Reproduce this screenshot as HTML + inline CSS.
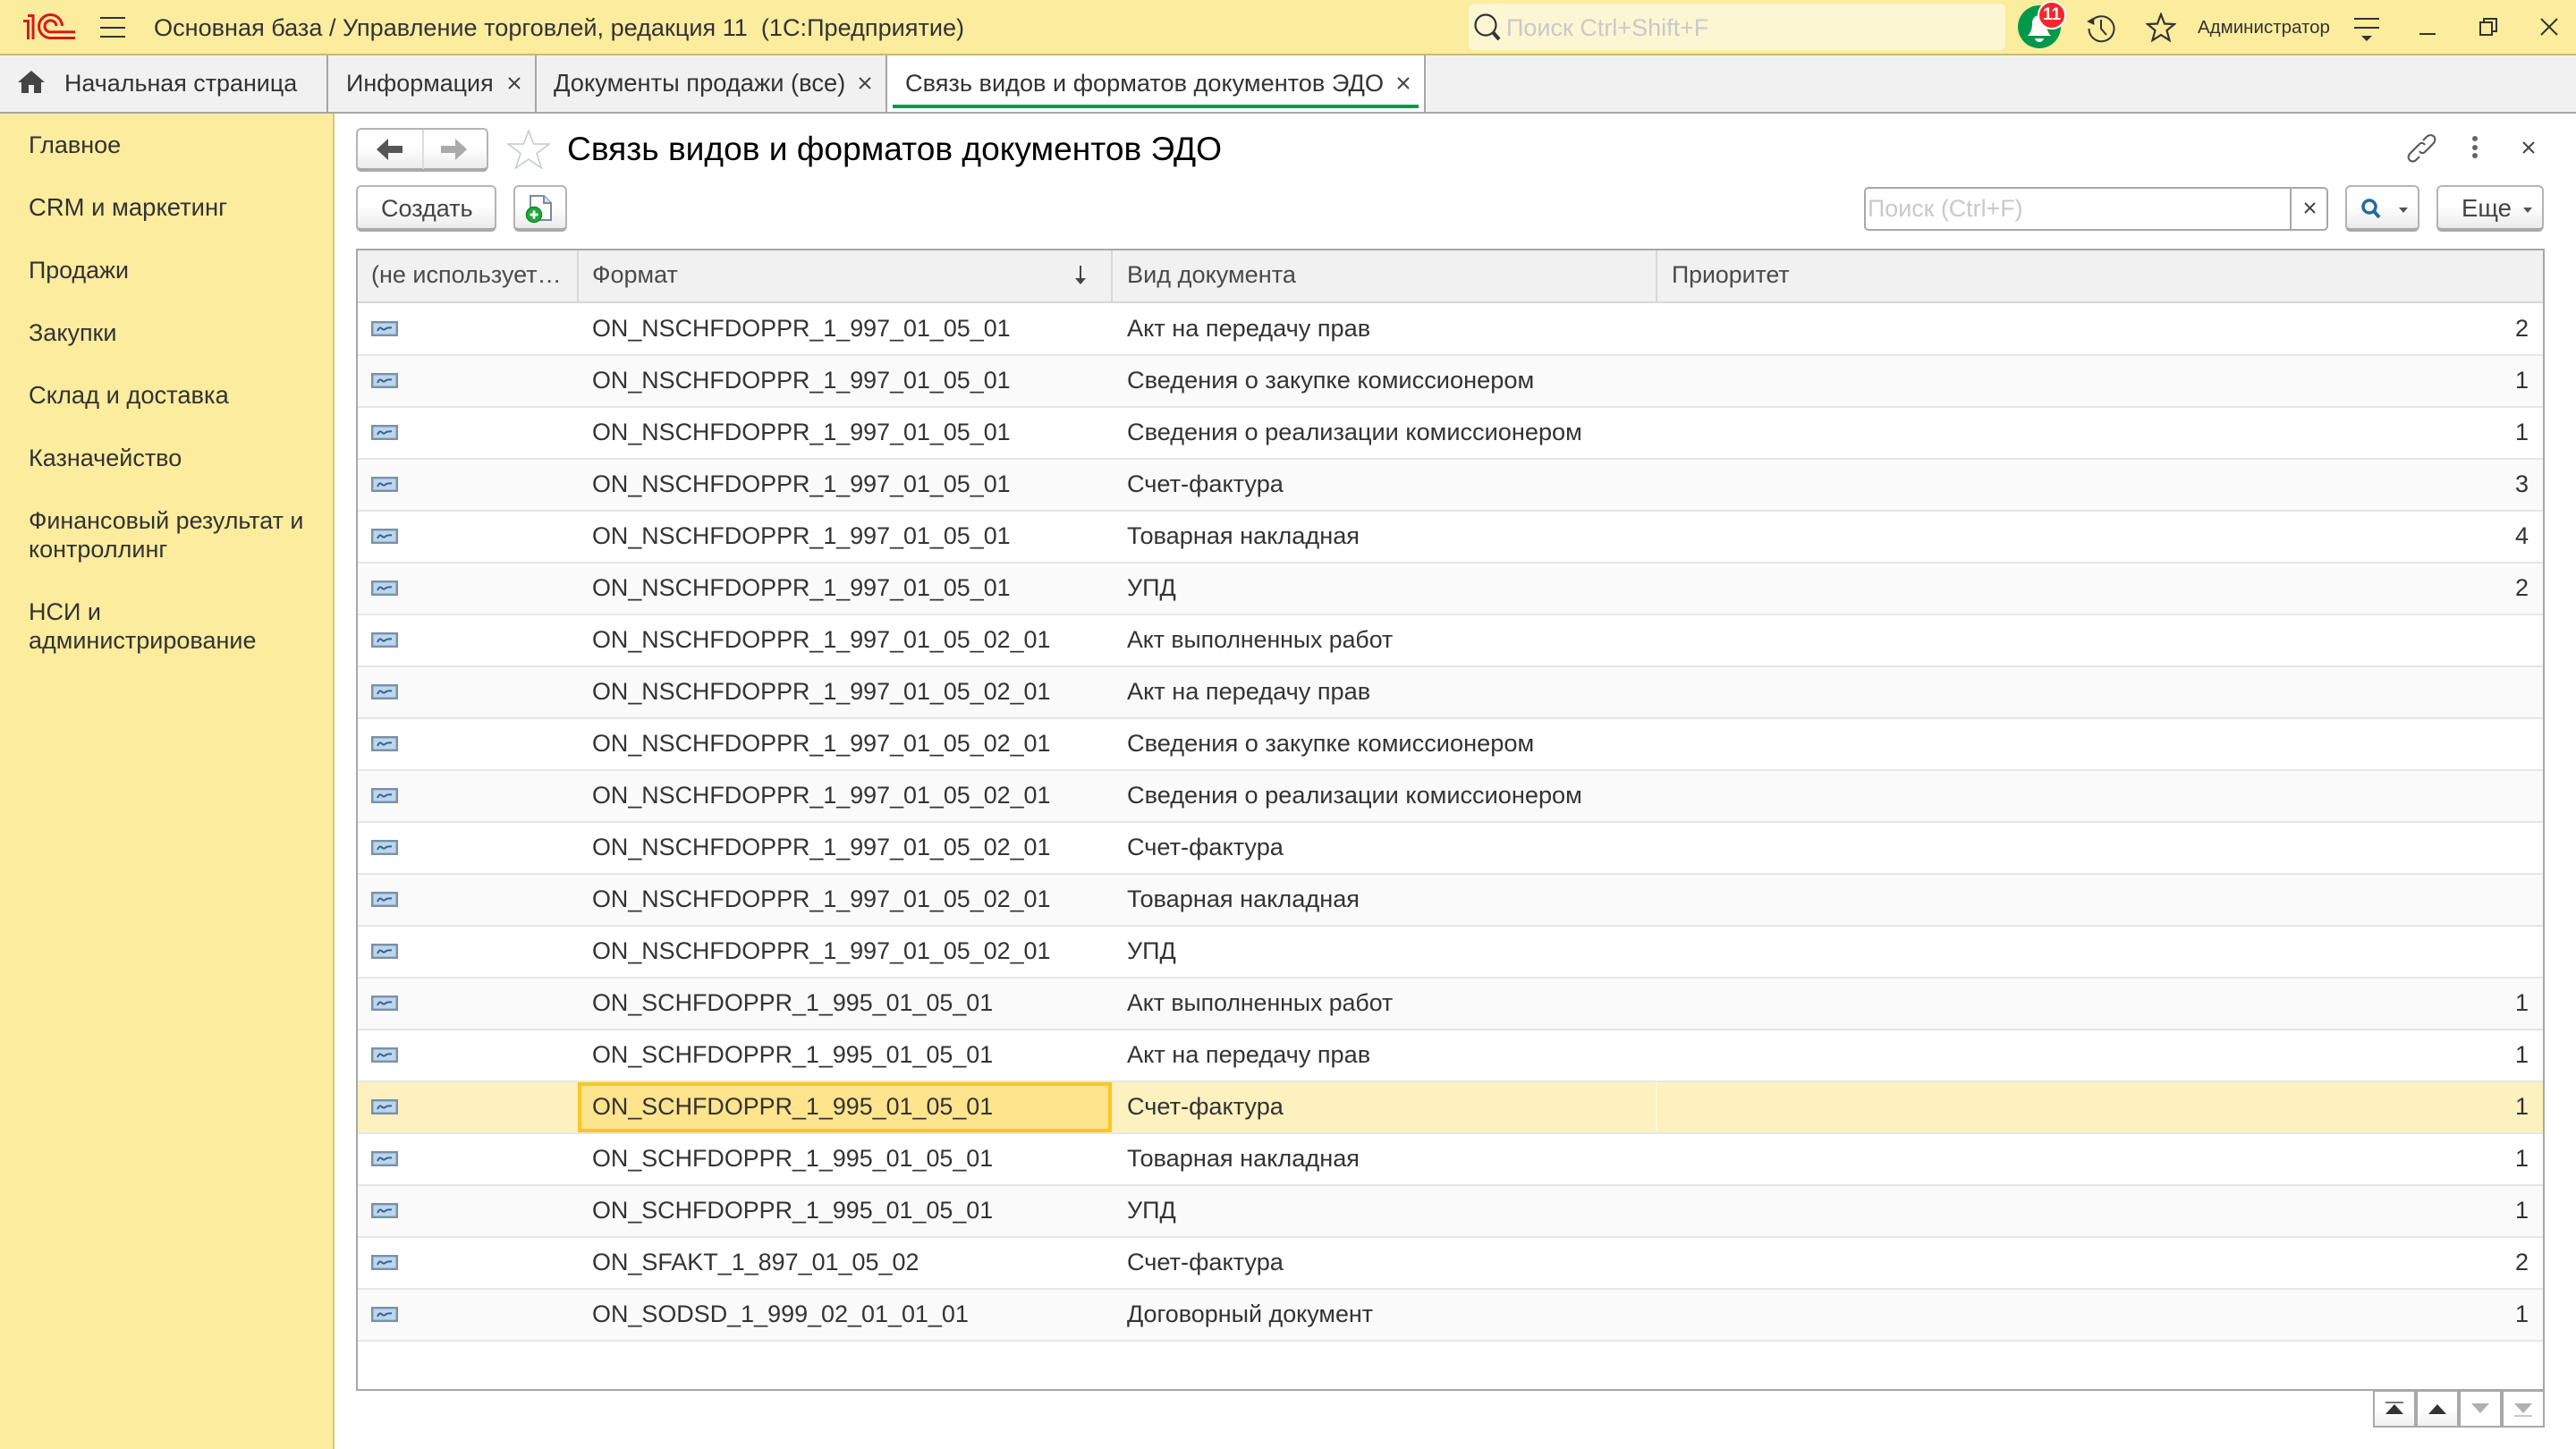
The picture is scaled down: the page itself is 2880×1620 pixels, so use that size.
<!DOCTYPE html>
<html lang="ru"><head><meta charset="utf-8"><title>Связь видов и форматов документов ЭДО</title>
<style>
html,body{margin:0;padding:0;width:2880px;height:1620px;overflow:hidden;background:#fff}
body{position:relative;font-family:"Liberation Sans",Arial,sans-serif;font-size:27px;color:#333}
div,span,svg{position:absolute;box-sizing:border-box}
.t{white-space:pre;line-height:36px;height:36px}
.btn{background:linear-gradient(#fff 45%,#ececec);border:2px solid #b4b4b4;border-bottom:4px solid #aaa;border-radius:6px}
.r{left:400px;width:2443px;height:58px;border-bottom:2px solid #e6e6e6}
.g{background:#fafafa}
.r svg{left:15px;top:19px}
.a{left:262px;top:9px;font-size:26.88px}.b{left:860px;top:9px;font-size:27.15px}.c{right:16px;top:9px}
.w{font-size:26.66px}.z{font-size:27.2px}.x{font-size:26.95px}
.pg{top:1554px;height:42px;width:48px;border:2px solid #a8a8a8}
</style></head><body>
<svg width="0" height="0" style="left:0;top:0"><defs><symbol id="ic" viewBox="0 0 30 17"><rect x="1.2" y="1.2" width="27.6" height="14.6" fill="#bcd6ec" stroke="#7a90a8" stroke-width="2.4"/><path d="M7 11 C9 7 10 6.5 12 8.5 C14 10.5 15 9.5 17 8 C18.5 7.2 20 7.5 23 7.2" fill="none" stroke="#3d5f90" stroke-width="2"/></symbol></defs></svg>

<!-- top bar -->
<div style="left:0;top:0;width:2880px;height:62px;background:#fbec9e;border-bottom:2px solid #c9bb68"></div>
<svg style="left:0;top:0" width="100" height="60" viewBox="0 0 100 60" fill="none" stroke="#d8181c" stroke-width="3"><path d="M26 23.5H31.5V44M31 17.5H37V44"/><path d="M84 42.500H57A13 13 0 1 1 69.500 29"/><path d="M84 35.800H57A6.500 6.500 0 1 1 63 29"/></svg>
<div style="left:112px;top:19px;width:28px;height:2px;background:#333"></div>
<div style="left:112px;top:30px;width:28px;height:2px;background:#333"></div>
<div style="left:112px;top:40px;width:28px;height:2px;background:#333"></div>
<div class="t" style="left:172px;top:13px;font-size:27.1px">Основная база / Управление торговлей, редакция 11  (1С:Предприятие)</div>
<div style="left:1642px;top:4px;width:600px;height:52px;background:#fdf6d3;border-radius:6px"></div>
<svg style="left:1646px;top:13px" width="36" height="36" viewBox="0 0 36 36" fill="none" stroke="#333"><circle cx="15" cy="15" r="11.500" stroke-width="2.200"/><path d="M23 23L30 31" stroke-width="4"/></svg>
<div class="t" style="left:1684px;top:13px;color:#c9c9c9">Поиск Ctrl+Shift+F</div>
<!-- bell -->
<div style="left:2256px;top:6px;width:48px;height:48px;border-radius:50%;background:#00994a"></div>
<svg style="left:2256px;top:6px" width="48" height="48" viewBox="0 0 48 48" fill="#fff"><path d="M11 34C15 30 16 25 16 20C16 14 20 11 24 11C28 11 32 14 32 20C32 25 33 30 37 34Z"/><path d="M19 37H29C28 40 26 41 24 41C22 41 20 40 19 37Z"/></svg>
<div style="left:2278px;top:1px;width:32px;height:32px;border-radius:50%;background:#f4262c;border:2px solid #fff;color:#fff;font-weight:bold;font-size:19px;line-height:28px;text-align:center">11</div>
<svg style="left:2332px;top:14px" width="34" height="34" viewBox="0 0 34 34" fill="none" stroke="#333" stroke-width="2"><path d="M5.500 11A14 14 0 1 1 3.500 18"/><path d="M17 8V18L23 25"/><path d="M1 10L9 5.500L9.500 14Z" fill="#333" stroke="none"/></svg>
<svg style="left:2399px;top:14px" width="34" height="34" viewBox="0 0 34 34" fill="none" stroke="#333" stroke-width="2.200"><path d="M17 2L21 12.500L32 13L23.500 20L26.500 31L17 25L7.500 31L10.500 20L2 13L13 12.500Z"/></svg>
<div class="t" style="left:2457px;top:13px;font-size:20.5px">Администратор</div>
<svg style="left:2630px;top:18px" width="32" height="30" viewBox="0 0 32 30" fill="#333"><rect x="2" y="2" width="28" height="2"/><rect x="2" y="12" width="28" height="2"/><path d="M10 22H22L16 28Z"/></svg>
<div style="left:2705px;top:37px;width:18px;height:2px;background:#333"></div>
<svg style="left:2771px;top:19px" width="22" height="22" viewBox="0 0 22 22" fill="none" stroke="#333" stroke-width="2"><rect x="2" y="6" width="13" height="14"/><path d="M6 6V2H20V16H15"/></svg>
<svg style="left:2840px;top:20px" width="20" height="20" viewBox="0 0 20 20" stroke="#333" stroke-width="2"><path d="M1 1L19 19M19 1L1 19"/></svg>

<!-- tabs -->
<div style="left:0;top:62px;width:2880px;height:65px;background:#f1f1f1;border-bottom:2px solid #a6a6a6"></div>
<div style="left:992px;top:62px;width:600px;height:63px;background:#fff"></div>
<div style="left:365px;top:62px;width:2px;height:63px;background:#a6a6a6"></div>
<div style="left:598px;top:62px;width:2px;height:63px;background:#a6a6a6"></div>
<div style="left:990px;top:62px;width:2px;height:63px;background:#a6a6a6"></div>
<div style="left:1592px;top:62px;width:2px;height:63px;background:#a6a6a6"></div>
<div style="left:998px;top:117px;width:588px;height:4px;background:#00994a"></div>
<svg style="left:20px;top:79px" width="30" height="25" viewBox="0 0 30 25" fill="#444"><path d="M15 0L30 13H26V25H18V16H12V25H4V13H0Z"/></svg>
<div class="t" style="left:72px;top:75px;font-size:26.9px">Начальная страница</div>
<div class="t" style="left:387px;top:75px;font-size:26.9px">Информация</div>
<div class="t" style="left:619px;top:75px;font-size:27.3px">Документы продажи (все)</div>
<div class="t" style="left:1012px;top:75px;font-size:27.15px">Связь видов и форматов документов ЭДО</div>
<svg style="left:568px;top:86px" width="14" height="14" viewBox="0 0 14 14" stroke="#444" stroke-width="2"><path d="M1 1L13 13M13 1L1 13"/></svg>
<svg style="left:960px;top:86px" width="14" height="14" viewBox="0 0 14 14" stroke="#444" stroke-width="2"><path d="M1 1L13 13M13 1L1 13"/></svg>
<svg style="left:1562px;top:86px" width="14" height="14" viewBox="0 0 14 14" stroke="#444" stroke-width="2"><path d="M1 1L13 13M13 1L1 13"/></svg>

<!-- sidebar -->
<div style="left:0;top:127px;width:374px;height:1493px;background:#fbec9e;border-right:2px solid #d4c87f"></div>
<div class="t" style="left:32px;top:144px">Главное</div>
<div class="t" style="left:32px;top:214px;font-size:27.45px">CRM и маркетинг</div>
<div class="t" style="left:32px;top:284px;font-size:26.8px">Продажи</div>
<div class="t" style="left:32px;top:354px">Закупки</div>
<div class="t" style="left:32px;top:424px;font-size:27.3px">Склад и доставка</div>
<div class="t" style="left:32px;top:494px">Казначейство</div>
<div class="t" style="left:32px;top:564px;font-size:26.85px">Финансовый результат и</div>
<div class="t" style="left:32px;top:596px">контроллинг</div>
<div class="t" style="left:32px;top:666px">НСИ и</div>
<div class="t" style="left:32px;top:698px">администрирование</div>

<!-- toolbar -->
<div class="btn" style="left:398px;top:143px;width:148px;height:49px"></div>
<div style="left:472px;top:145px;width:2px;height:44px;background:#dcdcdc"></div>
<svg style="left:421px;top:155px" width="30" height="24" viewBox="0 0 30 24" fill="#555"><path d="M0 12L13 0V8H29V16H13V24Z"/></svg>
<svg style="left:493px;top:155px" width="30" height="24" viewBox="0 0 30 24" fill="#aaa"><path d="M29 12L16 0V8H0V16H16V24Z"/></svg>
<svg style="left:567px;top:145px" width="48" height="44" viewBox="0 0 48 44" fill="#fff" stroke="#c4cad0" stroke-width="1.500"><path d="M24 1L29.500 16H47L33 26.500L38.500 43L24 33L9.500 43L15 26.500L1 16H18.500Z"/></svg>
<div class="t" style="left:634px;top:145px;height:42px;line-height:42px;font-size:37.15px;color:#000">Связь видов и форматов документов ЭДО</div>
<svg style="left:2690px;top:149px" width="34" height="33" viewBox="0 0 34 33" fill="none" stroke="#555" stroke-width="2"><path d="M19 8L23 4C26 1 31 2 32 5C33 8 32 10 30 12L21 21C19 23 16 22 15 20"/><path d="M15 12C17 10 20 11 21 13M15 12L5 22C2 25 2 28 4 30C6 32 9 32 11 30L15 26"/></svg>
<div style="left:2764px;top:152px;width:6px;height:6px;border-radius:50%;background:#666"></div>
<div style="left:2764px;top:162px;width:6px;height:6px;border-radius:50%;background:#666"></div>
<div style="left:2764px;top:171px;width:6px;height:6px;border-radius:50%;background:#666"></div>
<svg style="left:2820px;top:158px" width="14" height="14" viewBox="0 0 14 14" stroke="#444" stroke-width="2"><path d="M1 1L13 13M13 1L1 13"/></svg>

<div class="btn" style="left:398px;top:207px;width:157px;height:52px"></div>
<div class="t" style="left:426px;top:215px;color:#444">Создать</div>
<div class="btn" style="left:574px;top:207px;width:60px;height:52px"></div>
<svg style="left:586px;top:218px" width="38" height="36" viewBox="0 0 38 36" fill="none"><path d="M7 1H22L30 9V28H7Z" fill="#fff" stroke="#7a8a9c" stroke-width="2"/><path d="M22 1V9H30" fill="#d9e0e8" stroke="#7a8a9c" stroke-width="2"/><circle cx="11" cy="22" r="8.500" fill="#22a83a" stroke="#16872c" stroke-width="1.500"/><path d="M6.500 22H15.500M11 17.500V26.500" stroke="#fff" stroke-width="2.800"/></svg>

<div style="left:2084px;top:209px;width:519px;height:49px;border:2px solid #a8a8a8;border-radius:5px;background:#fff"></div>
<div style="left:2560px;top:211px;width:2px;height:45px;background:#a8a8a8"></div>
<div class="t" style="left:2088px;top:215px;color:#c9c9c9;font-size:26.85px">Поиск (Ctrl+F)</div>
<svg style="left:2576px;top:226px" width="13" height="13" viewBox="0 0 13 13" stroke="#444" stroke-width="2"><path d="M1 1L12 12M12 1L1 12"/></svg>
<div class="btn" style="left:2622px;top:207px;width:83px;height:52px"></div>
<svg style="left:2639px;top:221px" width="24" height="24" viewBox="0 0 24 24" fill="none" stroke="#226c98"><circle cx="10" cy="10" r="7" stroke-width="3.500"/><path d="M15 15L21 22" stroke-width="4"/></svg>
<svg style="left:2681px;top:231px" width="12" height="8" viewBox="0 0 12 8" fill="#555"><path d="M1 1H11L6 7Z"/></svg>
<div class="btn" style="left:2724px;top:207px;width:120px;height:52px"></div>
<div class="t" style="left:2752px;top:215px;color:#444;font-size:27.5px">Еще</div>
<svg style="left:2820px;top:231px" width="12" height="8" viewBox="0 0 12 8" fill="#555"><path d="M1 1H11L6 7Z"/></svg>

<!-- table -->
<div style="left:398px;top:278px;width:2447px;height:1277px;border:2px solid #a8a8a8"></div>
<div style="left:400px;top:280px;width:2443px;height:59px;background:#f1f1f1;border-bottom:2px solid #d8d8d8"></div>
<div style="left:645px;top:280px;width:2px;height:58px;background:#d8d8d8"></div>
<div style="left:1242px;top:280px;width:2px;height:58px;background:#d8d8d8"></div>
<div style="left:1851px;top:280px;width:2px;height:58px;background:#d8d8d8"></div>
<div class="t" style="left:415px;top:289px;color:#4a4a4a">(не использует…</div>
<div class="t" style="left:662px;top:289px;color:#4a4a4a">Формат</div>
<svg style="left:1202px;top:297px" width="12" height="22" viewBox="0 0 12 22" fill="#444"><rect x="5" y="0" width="2" height="18"/><path d="M0 14H12L6 21Z"/></svg>
<div class="t" style="left:1260px;top:289px;color:#4a4a4a;font-size:27.15px">Вид документа</div>
<div class="t" style="left:1869px;top:289px;color:#4a4a4a;font-size:26.7px">Приоритет</div>

<div class="r" style="top:340px"><svg width="30" height="17"><use href="#ic"/></svg><span class="t a">ON_NSCHFDOPPR_1_997_01_05_01</span><span class="t b">Акт на передачу прав</span><span class="t c">2</span></div>
<div class="r g" style="top:398px"><svg width="30" height="17"><use href="#ic"/></svg><span class="t a">ON_NSCHFDOPPR_1_997_01_05_01</span><span class="t b z">Сведения о закупке комиссионером</span><span class="t c">1</span></div>
<div class="r" style="top:456px"><svg width="30" height="17"><use href="#ic"/></svg><span class="t a">ON_NSCHFDOPPR_1_997_01_05_01</span><span class="t b">Сведения о реализации комиссионером</span><span class="t c">1</span></div>
<div class="r g" style="top:514px"><svg width="30" height="17"><use href="#ic"/></svg><span class="t a">ON_NSCHFDOPPR_1_997_01_05_01</span><span class="t b">Счет-фактура</span><span class="t c">3</span></div>
<div class="r" style="top:572px"><svg width="30" height="17"><use href="#ic"/></svg><span class="t a">ON_NSCHFDOPPR_1_997_01_05_01</span><span class="t b">Товарная накладная</span><span class="t c">4</span></div>
<div class="r g" style="top:630px"><svg width="30" height="17"><use href="#ic"/></svg><span class="t a">ON_NSCHFDOPPR_1_997_01_05_01</span><span class="t b x">УПД</span><span class="t c">2</span></div>
<div class="r" style="top:688px"><svg width="30" height="17"><use href="#ic"/></svg><span class="t a">ON_NSCHFDOPPR_1_997_01_05_02_01</span><span class="t b w">Акт выполненных работ</span></div>
<div class="r g" style="top:746px"><svg width="30" height="17"><use href="#ic"/></svg><span class="t a">ON_NSCHFDOPPR_1_997_01_05_02_01</span><span class="t b">Акт на передачу прав</span></div>
<div class="r" style="top:804px"><svg width="30" height="17"><use href="#ic"/></svg><span class="t a">ON_NSCHFDOPPR_1_997_01_05_02_01</span><span class="t b z">Сведения о закупке комиссионером</span></div>
<div class="r g" style="top:862px"><svg width="30" height="17"><use href="#ic"/></svg><span class="t a">ON_NSCHFDOPPR_1_997_01_05_02_01</span><span class="t b">Сведения о реализации комиссионером</span></div>
<div class="r" style="top:920px"><svg width="30" height="17"><use href="#ic"/></svg><span class="t a">ON_NSCHFDOPPR_1_997_01_05_02_01</span><span class="t b">Счет-фактура</span></div>
<div class="r g" style="top:978px"><svg width="30" height="17"><use href="#ic"/></svg><span class="t a">ON_NSCHFDOPPR_1_997_01_05_02_01</span><span class="t b">Товарная накладная</span></div>
<div class="r" style="top:1036px"><svg width="30" height="17"><use href="#ic"/></svg><span class="t a">ON_NSCHFDOPPR_1_997_01_05_02_01</span><span class="t b x">УПД</span></div>
<div class="r g" style="top:1094px"><svg width="30" height="17"><use href="#ic"/></svg><span class="t a">ON_SCHFDOPPR_1_995_01_05_01</span><span class="t b w">Акт выполненных работ</span><span class="t c">1</span></div>
<div class="r" style="top:1152px"><svg width="30" height="17"><use href="#ic"/></svg><span class="t a">ON_SCHFDOPPR_1_995_01_05_01</span><span class="t b">Акт на передачу прав</span><span class="t c">1</span></div>
<div class="r" style="top:1210px;background:#fdf1c0"><div style="left:246px;top:0;width:597px;height:56px;background:#ffe48e;border:4px solid #fac81e"></div><div style="left:1451px;top:0;width:2px;height:56px;background:#fef7d9"></div><svg width="30" height="17"><use href="#ic"/></svg><span class="t a">ON_SCHFDOPPR_1_995_01_05_01</span><span class="t b">Счет-фактура</span><span class="t c">1</span></div>
<div class="r" style="top:1268px"><svg width="30" height="17"><use href="#ic"/></svg><span class="t a">ON_SCHFDOPPR_1_995_01_05_01</span><span class="t b">Товарная накладная</span><span class="t c">1</span></div>
<div class="r g" style="top:1326px"><svg width="30" height="17"><use href="#ic"/></svg><span class="t a">ON_SCHFDOPPR_1_995_01_05_01</span><span class="t b x">УПД</span><span class="t c">1</span></div>
<div class="r" style="top:1384px"><svg width="30" height="17"><use href="#ic"/></svg><span class="t a" style="font-size:26.95px">ON_SFAKT_1_897_01_05_02</span><span class="t b">Счет-фактура</span><span class="t c">2</span></div>
<div class="r g" style="top:1442px"><svg width="30" height="17"><use href="#ic"/></svg><span class="t a" style="font-size:26.95px">ON_SODSD_1_999_02_01_01_01</span><span class="t b x">Договорный документ</span><span class="t c">1</span></div>

<!-- pager -->
<div class="pg" style="left:2653px;background:linear-gradient(#fff 50%,#f0f0f0)"></div>
<div class="pg" style="left:2701px;background:linear-gradient(#fff 50%,#f0f0f0)"></div>
<div class="pg" style="left:2749px;background:#fff"></div>
<div class="pg" style="left:2797px;width:48px;background:#fff"></div>
<svg style="left:2667px;top:1567px" width="20" height="15" viewBox="0 0 20 15" fill="#333"><rect x="0" y="0" width="20" height="2" fill="#777"/><path d="M10 3L20 14H0Z"/></svg>
<svg style="left:2715px;top:1570px" width="20" height="12" viewBox="0 0 20 12"><path d="M10 0L20 11H0Z" fill="#333"/></svg>
<svg style="left:2763px;top:1569px" width="20" height="12" viewBox="0 0 20 12"><path d="M0 0H20L10 11Z" fill="#b0b0b0"/></svg>
<svg style="left:2811px;top:1569px" width="20" height="15" viewBox="0 0 20 15" fill="#b0b0b0"><path d="M0 0H20L10 11Z"/><rect x="0" y="13" width="20" height="2" fill="#c8c8c8"/></svg>
</body></html>
